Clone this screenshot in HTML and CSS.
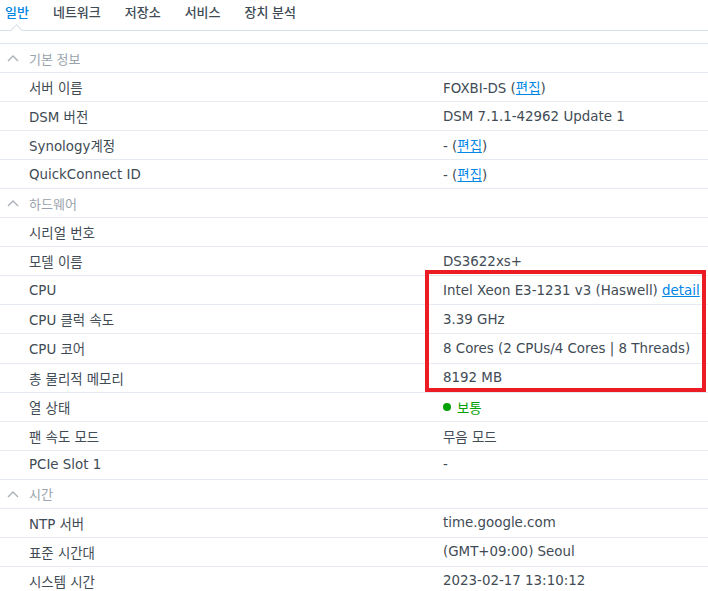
FILE: index.html
```html
<!DOCTYPE html>
<html lang="ko">
<head>
<meta charset="utf-8">
<link rel="stylesheet" href="styles.css">
</head>
<body>
<div class="page">
  <nav class="tabs">
    <span class="tab active">일반</span>
    <span class="tab">네트워크</span>
    <span class="tab">저장소</span>
    <span class="tab">서비스</span>
    <span class="tab">장치 분석</span>
  </nav>
  <div class="list">
    <div class="group"><svg class="chev" viewBox="0 0 12 8" width="12" height="8"><path d="M1 7 L6 2 L11 7" fill="none" stroke="#a8b0b8" stroke-width="1.4"/></svg>기본 정보</div>
    <div class="row"><span class="k">서버 이름</span><span class="v">FOXBI-DS (<a class="lnk">편집</a>)</span></div>
    <div class="row"><span class="k">DSM 버전</span><span class="v">DSM 7.1.1-42962 Update 1</span></div>
    <div class="row"><span class="k">Synology계정</span><span class="v">- (<a class="lnk">편집</a>)</span></div>
    <div class="row"><span class="k">QuickConnect ID</span><span class="v">- (<a class="lnk">편집</a>)</span></div>
    <div class="group"><svg class="chev" viewBox="0 0 12 8" width="12" height="8"><path d="M1 7 L6 2 L11 7" fill="none" stroke="#a8b0b8" stroke-width="1.4"/></svg>하드웨어</div>
    <div class="row"><span class="k">시리얼 번호</span><span class="v"></span></div>
    <div class="row"><span class="k">모델 이름</span><span class="v">DS3622xs+</span></div>
    <div class="row"><span class="k">CPU</span><span class="v">Intel Xeon E3-1231 v3 (Haswell) <a class="lnk">detail</a></span></div>
    <div class="row"><span class="k">CPU 클럭 속도</span><span class="v">3.39 GHz</span></div>
    <div class="row"><span class="k">CPU 코어</span><span class="v">8 Cores (2 CPUs/4 Cores | 8 Threads)</span></div>
    <div class="row"><span class="k">총 물리적 메모리</span><span class="v">8192 MB</span></div>
    <div class="row"><span class="k">열 상태</span><span class="v ok"><span class="dot"></span>보통</span></div>
    <div class="row"><span class="k">팬 속도 모드</span><span class="v">무음 모드</span></div>
    <div class="row"><span class="k">PCIe Slot 1</span><span class="v">-</span></div>
    <div class="group"><svg class="chev" viewBox="0 0 12 8" width="12" height="8"><path d="M1 7 L6 2 L11 7" fill="none" stroke="#a8b0b8" stroke-width="1.4"/></svg>시간</div>
    <div class="row"><span class="k">NTP 서버</span><span class="v">time.google.com</span></div>
    <div class="row"><span class="k">표준 시간대</span><span class="v">(GMT+09:00) Seoul</span></div>
    <div class="row"><span class="k">시스템 시간</span><span class="v">2023-02-17 13:10:12</span></div>
  </div>
  <div class="highlight"></div>
</div>
</body>
</html>
```
FILE: styles.css
```css
html, body {
  margin: 0;
  padding: 0;
  background: #ffffff;
  overflow: hidden;
}
body {
  font-family: "DejaVu Sans", "Noto Sans CJK KR", sans-serif;
  font-size: 13.4px;
  color: #414b55;
}
.page {
  position: relative;
  width: 708px;
  height: 591px;
}
.tabs {
  display: flex;
  height: 31px;
  box-sizing: border-box;
  border-bottom: 1px solid #d7dfe8;
  padding-left: 5px;
  gap: 24px;
  position: relative;
}
.tab {
  font-family: "Noto Sans CJK KR", sans-serif;
  font-weight: 500;
  font-size: 13px;
  line-height: 23px;
  color: #414b55;
}
.tab.active {
  color: #0086e5;
  position: relative;
}
.tab.active::after {
  content: "";
  position: absolute;
  left: 7px;
  top: 26px;
  width: 8px;
  height: 8px;
  background: #fff;
  border-top: 1px solid #d7dfe8;
  border-left: 1px solid #d7dfe8;
  transform: rotate(45deg);
}
.list {
  margin-top: 12px;
  border-top: 1px solid #dfe5ec;
}
.group, .row {
  display: flex;
  align-items: center;
  height: 29.05px;
  box-sizing: border-box;
  border-bottom: 1px solid #e6ebf1;
}
.group {
  padding-left: 7px;
  font-family: "Noto Sans CJK KR", sans-serif;
  color: #9aa3ad;
  font-size: 13px;
}
.chev {
  margin-right: 10px;
}
.k {
  padding-left: 29px;
  width: 414px;
  flex: none;
}
.v {
  white-space: nowrap;
}
.lnk {
  color: #0086e5;
  text-decoration: underline;
}
.ok {
  color: #00a000;
  display: flex;
  align-items: center;
}
.dot {
  width: 8px;
  height: 8px;
  border-radius: 50%;
  background: #00a000;
  margin-right: 6px;
}
.highlight {
  position: absolute;
  left: 425px;
  top: 270px;
  width: 281px;
  height: 122px;
  box-sizing: border-box;
  border: 4px solid #ec1c24;
}
```
